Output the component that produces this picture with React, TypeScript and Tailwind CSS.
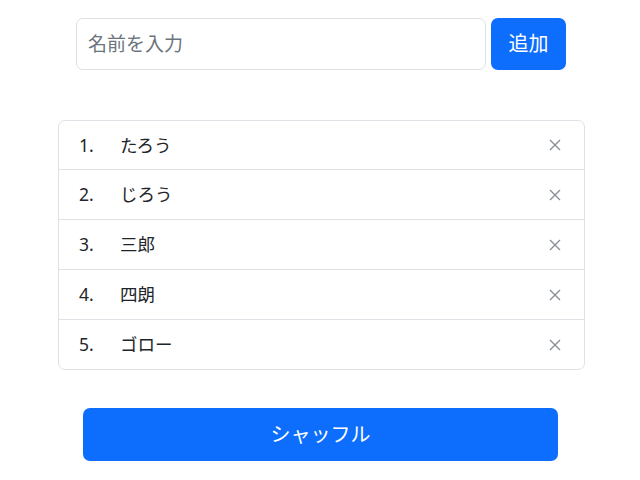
import React, { useState } from "react";

const font = { fontFamily: '"Noto Sans", "Noto Sans CJK JP", sans-serif' };

export default function App() {
  const [names] = useState(["たろう", "じろう", "三郎", "四朗", "ゴロー"]);

  return (
    <div className="w-[640px] h-[480px] bg-white text-[#212529]" style={font}>
      <div className="flex gap-[5px] pl-[76px] pt-[18px]">
        <input
          className="w-[410px] h-[52px] rounded-[7px] border border-[#dee2e6] px-[11px] text-[19px] placeholder:text-[#6c757d] outline-none"
          placeholder="名前を入力"
        />
        <button className="w-[75px] h-[52px] rounded-[7px] bg-[#0d6efd] text-white text-[20px]">追加</button>
      </div>

      <ul className="ml-[58px] mt-[50px] w-[527px] rounded-[7px] border border-[#dee2e6]">
        {names.map((name, i) => (
          <li
            key={name}
            className="flex items-center h-[50px] first:h-[48px] pl-[20px] pr-[23px] border-t border-[#dee2e6] first:border-t-0 text-[17.5px]"
          >
            <span className="w-[41px]">{i + 1}.</span>
            <span className="flex-1">{name}</span>
            <svg width="12" height="12" viewBox="0 0 12 12" className="text-[#8a8f95]">
              <path d="M1 1L11 11M11 1L1 11" stroke="currentColor" strokeWidth="1.4" />
            </svg>
          </li>
        ))}
      </ul>

      <button className="ml-[83px] mt-[38px] w-[475px] h-[53px] rounded-[7px] bg-[#0d6efd] text-white text-[20px]">シャッフル</button>
    </div>
  );
}
